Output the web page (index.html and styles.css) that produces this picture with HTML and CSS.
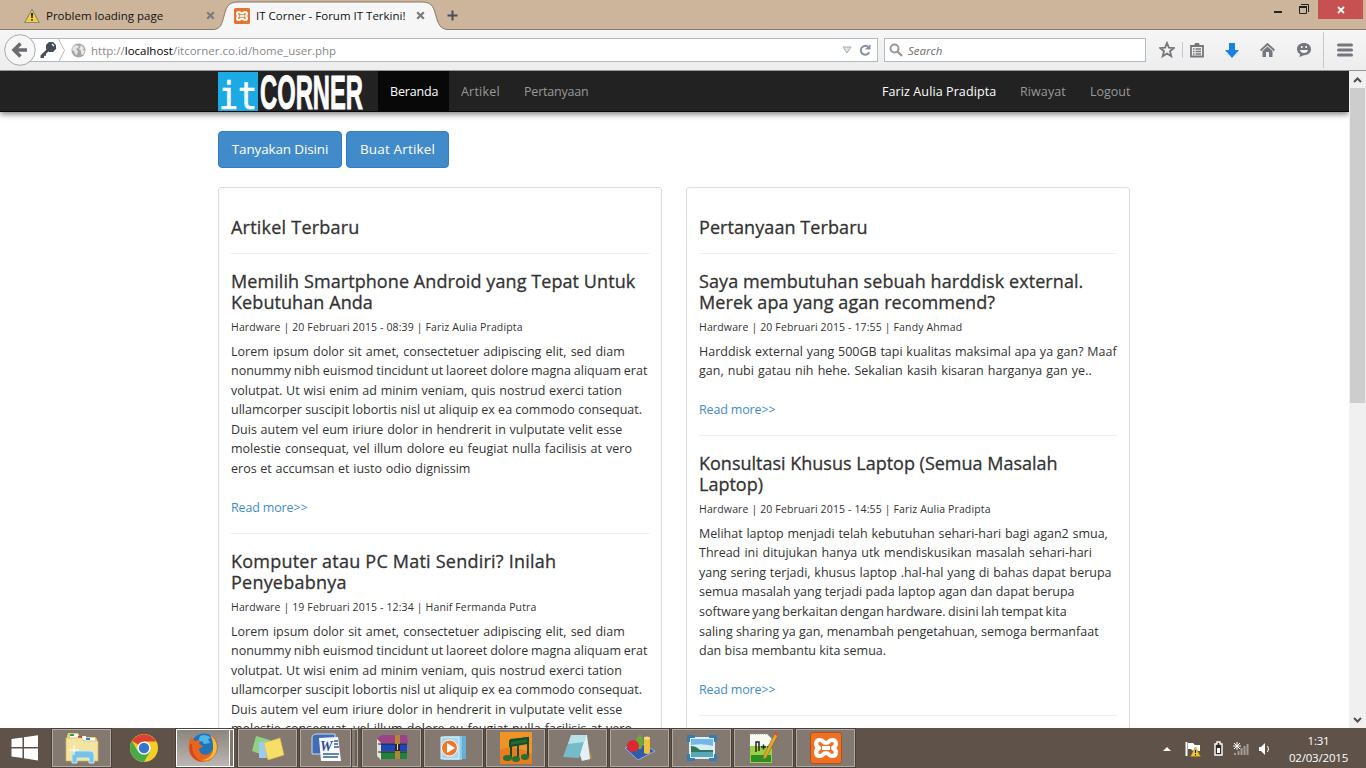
FILE: index.html
```html
<!DOCTYPE html>
<html lang="id">
<head>
<meta charset="utf-8">
<title>IT Corner - Forum IT Terkini!</title>
<link rel="stylesheet" href="styles.css">
</head>
<body>
<div class="screen">
<header class="tabs">
  <div class="tab">
    <svg class="fav" width="16" height="16" viewBox="0 0 16 16"><path d="M8 1.2L15.2 14.500H.8z" fill="#f5d32c" stroke="#8a8d86" stroke-width="1.200" stroke-linejoin="round"/><path d="M7 5h2l-.3 5H7.300zM7.200 11h1.600v1.700H7.200z" fill="#222"/></svg>
    <span class="tab-title t1">Problem loading page</span>
    <svg class="x" width="9" height="9" viewBox="0 0 9 9"><path d="M1.200 1.200l6.600 6.600M7.800 1.200L1.200 7.800" stroke="#777b80" stroke-width="2.200"/></svg>
  </div>
  <div class="tab active">
    <svg class="curve" width="235" height="30" viewBox="0 0 235 30"><path d="M0 29.500C8 29.500 9 23 11 16S14 2 25 2h184c11 0 12 7 14 14s4 13.500 12 13.500V30H0z" fill="#f6f6f6"/><path d="M0 29.500C8 29.500 9 23 11 16S14 2 25 2h184c11 0 12 7 14 14s4 13.500 12 13.500" fill="none" stroke="#85796c"/></svg>
    <svg class="fav" width="16" height="16" viewBox="0 0 32 32"><use href="#xampp"/></svg>
    <span class="tab-title t2">IT Corner - Forum IT Terkini!</span>
    <svg class="x" width="9" height="9" viewBox="0 0 9 9"><path d="M1.200 1.200l6.600 6.600M7.800 1.200L1.200 7.800" stroke="#777b80" stroke-width="2.200"/></svg>
  </div>
  <svg class="plus" width="11" height="11" viewBox="0 0 11 11"><path d="M5.500.5v10M.5 5.500h10" stroke="#45505a" stroke-width="2"/></svg>
  <div class="window-buttons">
    <svg width="8" height="20"><path d="M0 12h8" stroke="#222" stroke-width="2"/></svg>
    <svg width="10" height="20" viewBox="0 0 10 20"><path d="M2 4.500h7.500V12M.5 7.500h7v6h-7z" fill="none" stroke="#222"/><path d="M0 7h8" stroke="#222" stroke-width="2"/></svg>
    <span class="close"><svg width="8" height="8" viewBox="0 0 8 8"><path d="M1 1l6 6M7 1L1 7" stroke="#fff" stroke-width="1.800"/></svg></span>
  </div>
</header>
<div class="toolbar">
  <div class="address">
    <svg class="key" width="18" height="18" viewBox="0 0 18 18"><path d="M8 8L1.500 14.500V17H5v-2.200h2v-2l3-2.800" fill="#444d55"/><path d="M10 1h4l3 3v4l-3 3h-4L7 8V4z" fill="#444d55"/><path d="M13 3l2 2" stroke="#fff" stroke-width="1.300"/></svg>
    <svg class="chev" width="8" height="23" viewBox="0 0 8 23"><path d="M.5 0l6 11.500-6 11.500" fill="none" stroke="#bbb"/></svg>
    <svg class="globe" width="15" height="15" viewBox="0 0 15 15"><circle cx="7.500" cy="7.500" r="7" fill="#a5a5a5"/><path d="M2 4l3-2 3 1-1 2-2 1 2 2-1 4-2-1-1-3-2-1zM10 2l3 3-1 2 2 1-2 4-2-1V8L8 6z" fill="#e5e5e5"/></svg>
    <span class="url">http://<b>localhost</b>/itcorner.co.id/home_user.php</span>
    <svg class="drop" width="10" height="8" viewBox="0 0 10 8"><path d="M1 1h8L5 7z" fill="#dde2e6" stroke="#a5adb5"/></svg>
    <svg class="reload" width="12" height="12" viewBox="0 0 12 12"><path d="M9 2.800A4.400 4.400 0 1 0 10.200 8.200" fill="none" stroke="#8393a4" stroke-width="2"/><path d="M11.500 0v5.500H6z" fill="#8393a4"/></svg>
  </div>
  <svg class="back" width="32" height="32" viewBox="0 0 32 32"><circle cx="16" cy="16" r="15.300" fill="#f7f7f7" stroke="#a9a9a9"/><path d="M16.500 9.500L10 16l6.500 6.500M10.500 16H23" fill="none" stroke="#696c70" stroke-width="3.500"/></svg>
  <div class="search">
    <svg width="14" height="14" viewBox="0 0 14 14"><circle cx="5.500" cy="5.500" r="4" fill="none" stroke="#999" stroke-width="2"/><path d="M8.500 8.500l4.500 4.500" stroke="#999" stroke-width="2.400"/></svg>
    <span>Search</span>
  </div>
  <div class="tools">
    <svg width="16" height="18" viewBox="0 0 16 18"><path d="M8 2l1.900 4.700 5 .3-3.900 3.200 1.300 5L8 12.500l-4.300 2.700 1.300-5L1.100 7l5-.3z" fill="none" stroke="#74777c" stroke-width="1.800"/></svg>
    <i class="sep"></i>
    <svg class="list" width="14" height="16" viewBox="0 0 14 16"><path d="M1 4h12v10.500H1z" fill="none" stroke="#74777c" stroke-width="1.800"/><path d="M4 4l1-3h4l1 3z" fill="#74777c"/><path d="M3 7h1.500M5.500 7H11M3 9.500h1.500M5.500 9.500H11M3 12h1.500M5.500 12H11" stroke="#74777c" stroke-width="1.300"/></svg>
    <svg class="dl" width="14" height="15" viewBox="0 0 14 15"><path d="M4 0h6v7h4l-7 8-7-8h4z" fill="#1880e8"/></svg>
    <svg class="home" width="15" height="14" viewBox="0 0 15 14"><path d="M.6 7.500L7.500 1l6.900 6.500" fill="none" stroke="#74777c" stroke-width="1.800"/><path d="M2.500 8l5-4.600 5 4.600v6H9V9H6v5H2.500z" fill="#74777c"/></svg>
    <svg class="smile" width="14" height="14" viewBox="0 0 14 14"><path d="M7 0c4 0 7 2.500 7 6.200S11 12 7 12.200L2.500 14 3 11C1.200 10 0 8.500 0 6.200 0 2.500 3 0 7 0z" fill="#74777c"/><path d="M3 7h8c-.5 4-7.500 4-8 0zM4 3h1.600v2H4zM8.400 3H10v2H8.400z" fill="#f4f4f4"/></svg>
    <i class="sep tall"></i>
    <svg class="menu" width="16" height="14" viewBox="0 0 16 14"><path d="M1.500 2h13M1.500 7h13M1.500 12h13" stroke="#74777c" stroke-width="3" stroke-linecap="round"/></svg>
  </div>
</div>
<main class="viewport">
  <div class="page">
    <nav class="navbar">
      <svg class="logo" width="148" height="40" viewBox="0 0 148 40"><path d="M0 1h40v39H0z" fill="#1caae5"/><text class="logo-it" x="1" y="37.500" textLength="38" lengthAdjust="spacingAndGlyphs">it</text><text class="logo-corner" x="42" y="37.500" textLength="103" lengthAdjust="spacingAndGlyphs">CORNER</text></svg>
      <a class="current">Beranda</a><a class="n2">Artikel</a><a class="n3">Pertanyaan</a>
      <a class="user">Fariz Aulia Pradipta</a><a class="n5">Riwayat</a><a class="n6">Logout</a>
    </nav>
    <div class="container">
      <div class="actions"><a class="btn ask">Tanyakan Disini</a><a class="btn write">Buat Artikel</a></div>
      <div class="columns">
        <section class="panel">
          <h3 class="loose">Artikel Terbaru</h3>
          <article>
            <h4>Memilih Smartphone Android yang Tepat Untuk<br>Kebutuhan Anda</h4>
            <small>Hardware | 20 Februari 2015 - 08:39 | Fariz Aulia Pradipta</small>
            <p><span class="wide">Lorem ipsum dolor sit amet, consectetuer adipiscing elit, sed diam</span><br><span class="snug">nonummy nibh euismod tincidunt ut laoreet dolore magna aliquam erat</span><br><span class="open">volutpat. Ut wisi enim ad minim veniam, quis nostrud exerci tation</span><br>ullamcorper suscipit lobortis nisl ut aliquip ex ea commodo consequat.<br><span class="open">Duis autem vel eum iriure dolor in hendrerit in vulputate velit esse</span><br><span class="wide">molestie consequat, vel illum dolore eu feugiat nulla facilisis at vero</span><br><span class="open">eros et accumsan et iusto odio dignissim</span></p>
            <a class="more">Read more&gt;&gt;</a>
          </article>
          <article>
            <h4 class="loose">Komputer atau PC Mati Sendiri? Inilah<br>Penyebabnya</h4>
            <small>Hardware | 19 Februari 2015 - 12:34 | Hanif Fermanda Putra</small>
            <p><span class="wide">Lorem ipsum dolor sit amet, consectetuer adipiscing elit, sed diam</span><br><span class="snug">nonummy nibh euismod tincidunt ut laoreet dolore magna aliquam erat</span><br><span class="open">volutpat. Ut wisi enim ad minim veniam, quis nostrud exerci tation</span><br>ullamcorper suscipit lobortis nisl ut aliquip ex ea commodo consequat.<br><span class="open">Duis autem vel eum iriure dolor in hendrerit in vulputate velit esse</span><br><span class="wide">molestie consequat, vel illum dolore eu feugiat nulla facilisis at vero</span></p>
          </article>
        </section>
        <section class="panel">
          <h3>Pertanyaan Terbaru</h3>
          <article>
            <h4>Saya membutuhan sebuah harddisk external.<br>Merek apa yang agan recommend?</h4>
            <small>Hardware | 20 Februari 2015 - 17:55 | Fandy Ahmad</small>
            <p><span class="open">Harddisk external yang 500GB tapi kualitas maksimal apa ya gan? Maaf</span><br><span class="wide">gan, nubi gatau nih hehe. Sekalian kasih kisaran harganya gan ye..</span></p>
            <a class="more">Read more&gt;&gt;</a>
          </article>
          <article>
            <h4 class="even">Konsultasi Khusus Laptop (Semua Masalah<br>Laptop)</h4>
            <small>Hardware | 20 Februari 2015 - 14:55 | Fariz Aulia Pradipta</small>
            <p><span class="open">Melihat laptop menjadi telah kebutuhan sehari-hari bagi agan2 smua,</span><br><span class="wide">Thread ini ditujukan hanya utk mendiskusikan masalah sehari-hari</span><br><span class="open">yang sering terjadi, khusus laptop .hal-hal yang di bahas dapat berupa</span><br>semua masalah yang terjadi pada laptop agan dan dapat berupa<br><span class="tight">software yang berkaitan dengan hardware. disini lah tempat kita</span><br>saling sharing ya gan, menambah pengetahuan, semoga bermanfaat<br>dan bisa membantu kita semua.</p>
            <a class="more">Read more&gt;&gt;</a>
          </article>
          <article></article>
        </section>
      </div>
    </div>
  </div>
  <aside class="scrollbar">
    <svg width="9" height="6" viewBox="0 0 9 6"><path d="M1 5l3.500-3.500L8 5" fill="none" stroke="#505050" stroke-width="2"/></svg>
    <div class="thumb"></div>
    <svg class="down" width="9" height="6" viewBox="0 0 9 6"><path d="M1 1l3.500 3.500L8 1" fill="none" stroke="#505050" stroke-width="2"/></svg>
  </aside>
</main>
<footer class="taskbar">
  <span class="start"><svg width="28" height="26" viewBox="0 0 28 26"><path d="M.5 4L11.500 2.500V12H.5zM13 2.300L27 .3V12H13zM.5 13.500h11V23L.5 21.500zM13 13.500h14v12L13 23.300z" fill="#fff"/></svg></span>
  <span class="task"><svg width="36" height="34" viewBox="0 0 36 34"><path d="M3 5l1-3h10l2 4h15l2 2v21H3z" fill="#e6cf78"/><path d="M6 3h8v4H6z" fill="#fff"/><path d="M6 3h4v2H6z" fill="#27a744"/><path d="M13 5h9v4h-9z" fill="#fff"/><path d="M14 5h4v2h-4z" fill="#d54025"/><path d="M21 7h10v4H21z" fill="#fff"/><path d="M22 7h4v2h-4z" fill="#2586d0"/><path d="M2 7h15l3 3h14v20H2z" fill="#f3e5a0" stroke="#ceb461" stroke-width=".7"/><path d="M8 32V24q0-4 4-4h14q4 0 4 4v8h-5v-5H13v5z" fill="#77c2e5" stroke="#c7e9f8"/><path d="M10 14v10M5 19h10" stroke="#fff"/></svg></span>
  <span class="task bare"><svg width="28" height="28" viewBox="0 0 28 28"><circle cx="14" cy="14" r="14" fill="#f4ce27"/><path d="M14 14L1.900 7A14 14 0 0 1 26.100 7.500H14z" fill="#dc4134"/><path d="M1.900 7A14 14 0 0 0 14 28l6-10.500L14 14 8 17.500z" fill="#4ba94b"/><circle cx="14" cy="14" r="6.600" fill="#fff"/><circle cx="14" cy="14" r="5.200" fill="#3476cc"/></svg></span>
  <span class="task hot"><svg width="32" height="32" viewBox="0 0 32 32"><circle cx="17" cy="15" r="13.500" fill="#2274b8"/><path d="M13 4q6-3 11 2l-3 1 2 4-6 1-2-3-4 1z" fill="#50b5e7"/><path d="M4 5l4 4 5-1-1 4 4 2-4 3c1 7 8 7 12 3 5-5 4-12-1-18 7 4 9 12 6 19-4 10-17 12-24 4C0 19 1 10 4 5z" fill="#e66620"/><path d="M23 3c8 5 9 16 3 22-3 3-7 4-11 3 8-1 12-7 11-14 0-5-1-8-3-11z" fill="#f6bd35"/><path d="M3 12c-2 9 4 17 12 18C7 25 5 21 5 12z" fill="#cf4521"/></svg></span>
  <i class="stack first"></i>
  <span class="task"><svg width="34" height="28" viewBox="0 0 34 28"><path d="M5 2l14 4-4 16L1 17z" fill="#8fd185"/><path d="M8 8l15-1v17H8z" fill="#9ccaf2"/><path d="M13 9l16-5 4 17-16 5z" fill="#f7df67" stroke="#d9bd42" stroke-width=".6"/></svg></span>
  <span class="task narrow"><svg width="32" height="30" viewBox="0 0 32 30"><path d="M2 5q0-4 5-4h18v20H2z" fill="#416db4" stroke="#c8d9f2"/><path d="M9 5l19-1 3 24H11z" fill="#f9fbff"/><text x="10" y="18" class="word">W</text><path d="M24 8h4M24 11h4M24 14h5M13 21h16M13 24h15" stroke="#345b9e" stroke-width="1.500"/></svg></span>
  <i class="stack second"></i>
  <span class="task"><svg width="34" height="26" viewBox="0 0 34 26"><path d="M2 3l5-3h25l1 8H5z" fill="#9b4386"/><path d="M3 9h29v7H5z" fill="#1749bd"/><path d="M3 17h29v7H5z" fill="#20813a"/><path d="M2 4l4 4v17l-4-4z" fill="#e9e2d7"/><path d="M3 9h29M3 17h29" stroke="#261c38"/><path d="M20 0h5v24h-5z" fill="#b58437"/><path d="M20 9h5v7h-5z" fill="#33231c"/><path d="M22.500 9v6" stroke="#ddd"/></svg></span>
  <span class="task"><svg width="30" height="26" viewBox="0 0 30 26"><path d="M8 1h19v23H8z" fill="#64afd7"/><path d="M5 1h18v24H5z" fill="#8bc7e8"/><path d="M2 2h18v22H2z" fill="#a8d8ef" stroke="#dff3fc"/><circle cx="10.500" cy="13" r="8" fill="#ee782a" stroke="#fff"/><path d="M8 8l8 5-8 5z" fill="#fff"/></svg></span>
  <span class="task"><svg width="32" height="32" viewBox="0 0 32 32"><path d="M0 0h32v32H0z" fill="#ee9425"/><path d="M0 18q12-7 32 4v10H0z" fill="#e77d1f"/><path d="M11 25V8l17-2v18" fill="none" stroke="#174c2c" stroke-width="2"/><path d="M10 9l18-3v5l-18 3zM18 12v14" fill="#246b31" stroke="#174c2c" stroke-width="2"/><ellipse cx="7.500" cy="26" rx="4.500" ry="3" fill="#286e35"/><ellipse cx="16" cy="27" rx="4" ry="3" fill="#286e35"/><ellipse cx="25" cy="25" rx="4" ry="3" fill="#286e35"/></svg></span>
  <span class="task"><svg width="32" height="30" viewBox="0 0 32 30"><path d="M24 4l6 21-4 3-3-4z" fill="#b28c55"/><path d="M11 2h14l3 24-8 2z" fill="#e4f1f4"/><path d="M9 2h15L17 25 1 24z" fill="#75bccb"/><path d="M9 2h15l-2 7L6 11z" fill="#b8e0e7"/><path d="M10 1h14" stroke="#777" stroke-width="2" stroke-dasharray="1 1"/></svg></span>
  <span class="task"><svg width="32" height="28" viewBox="0 0 32 28"><path d="M1 14l16-5 14 8-17 9z" fill="#315da8" stroke="#8dafe2"/><path d="M14 15q-5-8 2-15 6 8 1 15z" fill="#69ab3b"/><circle cx="9" cy="12" r="6" fill="#dc2832"/><path d="M20 4h6v15q-3 2-6 0z" fill="#efc03d"/><ellipse cx="23" cy="4" rx="3" ry="1.500" fill="#f9dd78"/></svg></span>
  <span class="task"><svg width="30" height="26" viewBox="0 0 30 26"><path d="M2 2h26v22H2z" fill="#dfedf8"/><path d="M4 4h22v18H4z" fill="#72b7e6"/><path d="M4 10q12-2 22 1v4H4z" fill="#d9eef4"/><path d="M4 11q5 0 9 4h13v3H4z" fill="#32775b"/><path d="M4 17h22v5H4z" fill="#58a9b6"/><path d="M0 7V0h8v3H3v4zM22 0h8v7h-3V3h-5zM0 19v7h8v-3H3v-4zM22 26h8v-7h-3v4h-5z" fill="#347dbb"/></svg></span>
  <span class="task"><svg width="30" height="32" viewBox="0 0 30 32"><path d="M1 2h17l5 5v24H1z" fill="#f5faf2"/><path d="M1 14h22v17H1z" fill="#9bd044"/><path d="M2 23h20v7H2z" fill="#298f25"/><path d="M2 2h16" stroke="#999" stroke-dasharray="1 1"/><path d="M7 20V10h3v9M12 15h5M14.500 12.500v5M18 15h5M20.500 12.500v5" fill="none" stroke="#20291d" stroke-width="1.500"/><path d="M26 1l3 2-12 23-3 1 1-4z" fill="#e5a62b" stroke="#95641a" stroke-width=".6"/><path d="M26 0l3 2-1 2-3-2z" fill="#e04949"/></svg></span>
  <span class="task"><svg width="32" height="32" viewBox="0 0 32 32"><defs><g id="xampp"><rect x=".5" y=".5" width="31" height="31" rx="3" fill="#ef7125" stroke="#b94e12"/><path d="M10 8c-5 0-5 6-1 8-4 2-4 8 1 8 3 0 3-3 6-3s3 3 6 3c5 0 5-6 1-8 4-2 4-8-1-8-3 0-3 3-6 3s-3-3-6-3zM12 16h8" fill="none" stroke="#fff" stroke-width="4.200" stroke-linejoin="round"/></g></defs><use href="#xampp"/></svg></span>
  <div class="tray">
    <svg width="8" height="5" viewBox="0 0 8 5"><path d="M0 5l4-4 4 4z" fill="#fff"/></svg>
    <svg class="flag" width="16" height="16" viewBox="0 0 16 16"><path d="M1.500 1v14" stroke="#fff" stroke-width="2"/><path d="M3 2h5l2 2h5v6H8L6 8H3z" fill="#fff"/><path d="M10.500 6l5 9.500h-10z" fill="#f5cc24" stroke="#a77a13" stroke-width=".6"/><path d="M10.500 9v3M10.500 13v1.500" stroke="#222" stroke-width="1.200"/></svg>
    <svg class="battery" width="9" height="15" viewBox="0 0 9 15"><path d="M3 1h3v2h2v11H1V3h2z" fill="#332c25" stroke="#fff" stroke-width="1.400"/><path d="M3 7h3v5H3z" fill="#fff"/></svg>
    <svg class="signal" width="17" height="14" viewBox="0 0 17 14"><path d="M2 11h2v2H2zM5.500 9h2v4h-2zM8.500 6h2v7h-2zM11.500 4h2v9h-2zM14.500 2h2v11h-2z" fill="#a39c94"/><path d="M5 0v8M1 4h8M2 1l6 6M8 1L2 7" stroke="#fff"/></svg>
    <svg class="sound" width="13" height="14" viewBox="0 0 13 14"><path d="M1 5h2l4-4v12L3 9H1z" fill="#fff"/><path d="M9.500 4q2 3 0 6" fill="none" stroke="#fff"/></svg>
    <div class="clock"><span>1:31</span><span>02/03/2015</span></div>
  </div>
</footer>
</div>
</body>
</html>
```
FILE: styles.css
```css
*{box-sizing:border-box}
body{margin:0;font-family:"Open Sans","Noto Sans",sans-serif}
svg{display:block;flex:none}
.screen{width:1366px;height:768px;overflow:hidden;display:flex;flex-direction:column}
.tabs{height:30px;flex:none;display:flex;background:#cdb59b;border-bottom:1px solid #85796c;font-size:11.500px;color:#111}
.tab{width:220px;height:30px;display:flex;align-items:center;padding:1px 5px 0 24px;position:relative}
.tab.active{width:226px;padding:1px 21px 0 14px}
.tab .curve{position:absolute;left:-7px;top:0}
.tab .fav,.tab .tab-title,.tab .x{position:relative}
.tab-title{margin-left:6px;white-space:nowrap}
.tab .x{margin-left:auto}
.plus{margin:10px 0 0 1px}
.window-buttons{margin-left:auto;display:flex}
.window-buttons>svg:nth-child(2){margin:0 8px 0 17px}
.close{width:45px;height:19px;margin:0 3px 0 1px;background:#c75050;display:grid;place-items:center}
.toolbar{height:41px;flex:none;display:flex;align-items:flex-start;position:relative;background:linear-gradient(#f6f6f6,#ededed);border-bottom:1px solid #979797;font-size:11.500px}
.address{margin-left:20px;margin-top:8px;width:858px;height:24px;background:#fff;border:1px solid #b2bac3;display:flex;align-items:center}
.key{margin-left:18px}
.chev{margin-left:1px}
.globe{margin-left:5px}
.url{margin-left:5px;color:#888;white-space:nowrap}
.url b{font-weight:400;color:#000}
.drop{margin-left:auto}
.reload{margin:0 6px 0 7px}
.back{position:absolute;left:4px;top:4px}
.search{margin:8px 0 0 6px;width:262px;height:24px;background:#fff;border:1px solid #b2bac3;display:flex;align-items:center;padding-left:4px;font-style:italic;color:#6d6d6d}
.search span{margin-left:5px}
.tools{display:flex;align-items:center;height:40px;padding-left:13px}
.sep{width:1px;height:16px;background:#c5c9cf;margin-left:7px}
.sep.tall{height:36px;margin-left:12px}
.list{margin-left:7px}.dl{margin-left:21px}.home{margin-left:21px}.smile{margin-left:22px}.menu{margin-left:13px}
.viewport{height:657px;flex:none;display:flex}
.page{width:1349px;height:657px;overflow:hidden;background:#fff;color:#333}
.navbar{height:41px;background:#222;border-bottom:1px solid #080808;box-shadow:0 2px 6px #0008;display:flex;padding-left:218px;font-size:12.500px;color:#999}
.navbar a{line-height:18px;padding-top:12px;white-space:nowrap}
.logo-it{font:37px "DejaVu Sans Mono",monospace;fill:#fff;stroke:#fff;stroke-width:.7}
.logo-corner{font:bold 48px "Liberation Sans",sans-serif;fill:#fff;stroke:#fff;stroke-width:1}
.navbar .current{width:71px;margin-left:12px;padding-left:12px;background:#080808;color:#fff;letter-spacing:-.15px}
.n2{width:63px;margin-left:12px;letter-spacing:.2px}
.n3{width:358px;letter-spacing:-.2px}
.user{width:138px;color:#fff;letter-spacing:.1px}
.n5{width:70px;letter-spacing:.1px}
.container{width:912px;margin-left:218px}
.actions{display:flex;gap:4px;padding-top:19px}
.btn{height:37px;border:1px solid #357ebd;border-radius:4px;background:#428bca;color:#fff;font-size:13.500px;line-height:35px;text-align:center;white-space:nowrap}
.ask{width:124px;letter-spacing:-.15px}
.write{width:103px;letter-spacing:.15px}
.columns{display:grid;grid-template-columns:444px 444px;gap:24px;padding-top:19px}
.panel{height:700px;border:1px solid #ddd;border-radius:3px;padding:29px 12px}
h3,h4{margin:0;font-size:18px;font-weight:400;line-height:21px;white-space:nowrap;letter-spacing:.08px;-webkit-text-stroke:.3px #333}
h3{padding-bottom:15px;height:36px}
.loose{letter-spacing:.22px}
.even{letter-spacing:0}
article{border-top:1px solid #eee;padding-top:17px}
small{display:block;font-size:10.500px;line-height:16px;margin-top:6px;white-space:nowrap;letter-spacing:.14px}
p{margin:6.600px 0 0;font-size:12.500px;line-height:19.570px;white-space:nowrap}
.wide{word-spacing:.9px}
.open{word-spacing:.5px}
.snug{word-spacing:-.35px}
.tight{word-spacing:-.9px}
.more{display:block;margin-top:19.570px;padding-bottom:15.300px;font-size:12.500px;line-height:19.570px;letter-spacing:-.15px;color:#428bca}
.scrollbar{width:17px;background:#f0f0f0;display:flex;flex-direction:column;align-items:center;padding-top:6px}
.thumb{width:15px;height:315px;background:#cdcdcd;margin-top:5px}
.down{margin-top:auto;margin-bottom:5px}
.taskbar{height:40px;flex:none;background:#5e5249;display:flex;gap:3px;padding-top:1px;position:relative}
.start{width:49px;padding:6px 0 0 11px}
.task{width:59px;height:38px;background:#837971;border:1px solid #b0aaa4;outline:1px solid #4a4038;display:grid;place-items:center}
.task.bare{background:none;border-color:transparent;outline:none}
.task.hot{width:54px;margin-right:5px;background:linear-gradient(#8b8580,#bbb6b2);border-color:#fff}
.task.narrow{width:51px;margin-right:8px}
.stack{position:absolute;top:1px;height:38px;width:4px;border:1px solid #b0aaa4;border-left:0;background:#837971}
.stack.first{left:230px;border-color:#fff}
.stack.second{left:352px;width:6px;box-shadow:inset -2px 0 #685e55}
.word{font:italic bold 14px "Liberation Serif",serif;fill:#284e91}
.tray{margin-left:auto;display:flex;align-items:center;color:#fff;font-size:11.500px}
.flag{margin-left:14px}.battery{margin-left:13px}.signal{margin-left:9px}.sound{margin-left:9px}
.clock{width:95px;display:flex;flex-direction:column;align-items:center;line-height:17px;letter-spacing:-.2px}
```
